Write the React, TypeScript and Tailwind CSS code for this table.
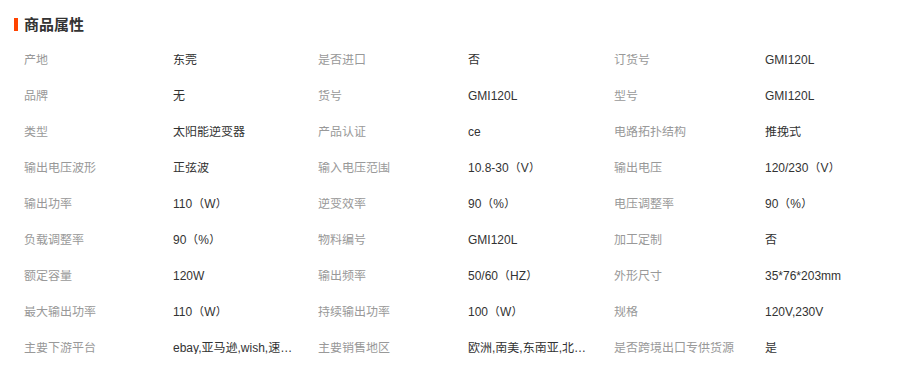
import React from 'react';

type Attr = [string, string];

const rows: Attr[][] = [
  [['产地', '东莞'], ['是否进口', '否'], ['订货号', 'GMI120L']],
  [['品牌', '无'], ['货号', 'GMI120L'], ['型号', 'GMI120L']],
  [['类型', '太阳能逆变器'], ['产品认证', 'ce'], ['电路拓扑结构', '推挽式']],
  [['输出电压波形', '正弦波'], ['输入电压范围', '10.8-30（V）'], ['输出电压', '120/230（V）']],
  [['输出功率', '110（W）'], ['逆变效率', '90（%）'], ['电压调整率', '90（%）']],
  [['负载调整率', '90（%）'], ['物料编号', 'GMI120L'], ['加工定制', '否']],
  [['额定容量', '120W'], ['输出频率', '50/60（HZ）'], ['外形尺寸', '35*76*203mm']],
  [['最大输出功率', '110（W）'], ['持续输出功率', '100（W）'], ['规格', '120V,230V']],
  [['主要下游平台', 'ebay,亚马逊,wish,速卖通,独立站,LAZADA'], ['主要销售地区', '欧洲,南美,东南亚,北美,非洲,中东'], ['是否跨境出口专供货源', '是']],
];

const labelW = ['w-[149px]', 'w-[150px]', 'w-[151px]'];
const valueW = ['w-[145px]', 'w-[146px]', 'w-[120px]'];

export default function App() {
  return (
    <div
      className="w-[900px] h-[368px] bg-white overflow-hidden"
      style={{ fontFamily: '"Liberation Sans", "Noto Sans CJK SC", sans-serif' }}
    >
      {/* Title */}
      <div className="flex items-center h-[24px] mt-[12px] pl-[14px]">
        <span className="w-[4px] h-[13px] bg-[#ff4400]" />
        <span className="ml-[6px] text-[15px] font-bold text-[#333] leading-none">商品属性</span>
      </div>

      {/* Attributes */}
      <div className="pl-[24px] mt-[6px]">
        {rows.map((row, i) => (
          <div key={i} className="flex items-center h-[36px] text-[12px] leading-none">
            {row.map(([label, value], j) => (
              <React.Fragment key={j}>
                <div className={`${labelW[j]} text-[#999] shrink-0 truncate`}>{label}</div>
                <div className={`${valueW[j]} shrink-0 overflow-hidden`}>
                  <div className="w-[121px] text-[#333] truncate">{value}</div>
                </div>
              </React.Fragment>
            ))}
          </div>
        ))}
      </div>
    </div>
  );
}
